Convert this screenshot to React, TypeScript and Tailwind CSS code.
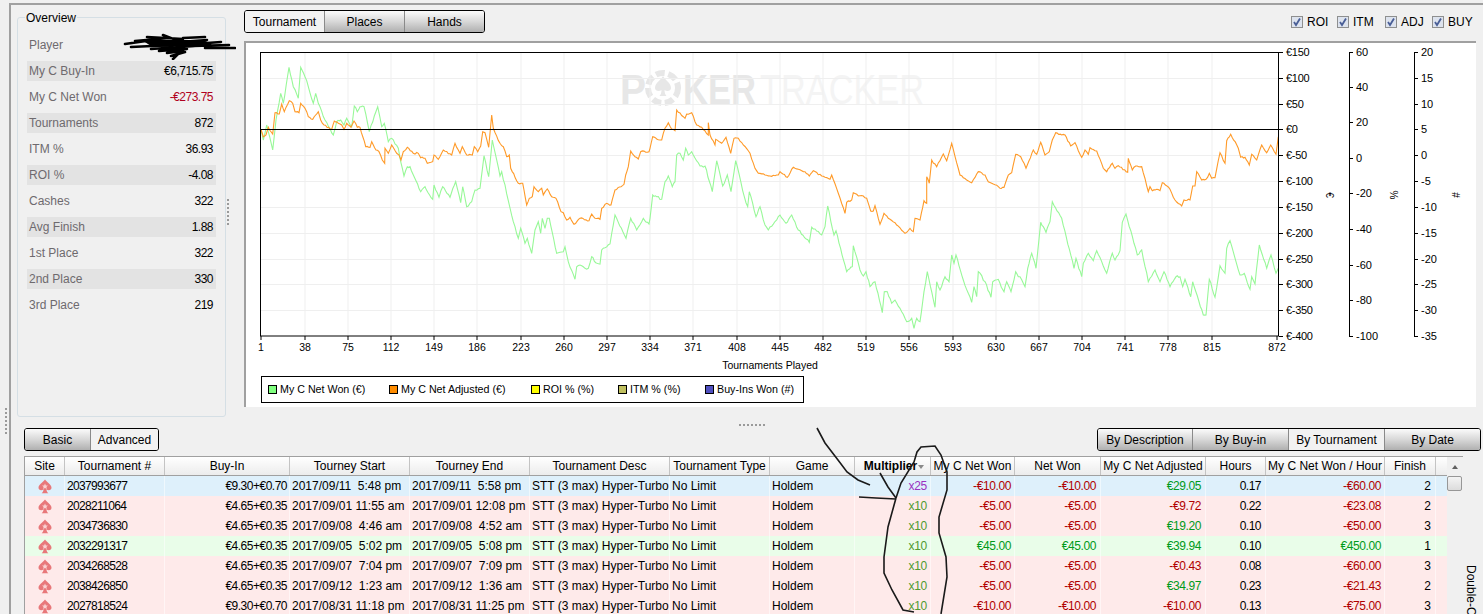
import React from "react";

type P = [number, number];
const z5 = (a: number[]) => pairs(a).map(([x, y]): P => [250 + x / 3, 40 + y / 3]);
const z6 = (a: number[]) => pairs(a).map(([x, y]): P => [650 + x / 3, 40 + y / 3]);
const z7 = (a: number[]) => pairs(a).map(([x, y]): P => [1000 + x / 3, 100 + y / 3]);
function pairs(a: number[]): P[] {
  const r: P[] = [];
  for (let i = 0; i < a.length; i += 2) r.push([a[i], a[i + 1]]);
  return r;
}
// The reference's curves zigzag at pixel level: subdivide each traced segment and add a small fixed wobble.
function noisy(p: P[], seed: number, amp: number) {
  let s = seed;
  const rnd = () => {
    s = (s * 16807) % 2147483647;
    return (s % 1000) / 1000 - 0.5;
  };
  const out: P[] = [];
  for (let i = 0; i < p.length - 1; i++) {
    const [x0, y0] = p[i];
    const [x1, y1] = p[i + 1];
    const n = Math.max(1, Math.round(Math.abs(x1 - x0) / 1.6));
    out.push([x0, y0]);
    for (let k = 1; k < n; k++) {
      const t = k / n;
      out.push([x0 + (x1 - x0) * t, y0 + (y1 - y0) * t + rnd() * amp]);
    }
  }
  out.push(p[p.length - 1]);
  return out.map(([x, y]) => `${x.toFixed(1)},${y.toFixed(1)}`).join(" ");
}

const green = noisy([
  ...z5([33,268,40,300,50,255,68,330,78,240,92,160,100,190,117,82,130,140,145,175,152,82,165,110,175,140,190,190,197,160,205,190,225,240,250,285,260,245,272,240,282,255,290,235,305,260,313,198,322,215,330,200,342,200,358,275,383,200,395,260,403,250,415,305,425,295,445,325,452,365,462,408,472,380,480,380,512,455,525,440,548,478,552,435,567,472,578,440,600,472,617,425,632,488,638,440,650,500,665,485,675,450,690,445,702,347,716,410,727,300,750,408,755,395,790,545,805,595,812,565,825,610,832,595,845,640,855,570,865,545,872,580,877,535,885,565,892,535,898,535,920,640,940,635,945,620,955,665,975,718,980,680,990,675,1005,685,1015,685,1025,650,1037,668,1050,672,1055,630,1080,612,1095,525,1128,595,1142,535,1160,570,1180,535,1197,552]),
  ...z6([0,535,8,465,20,470,35,478,45,425,55,408,67,440,75,425,80,345,90,340,100,360,107,325,115,345,125,335,150,378,165,378,187,455,200,362,218,438,232,405,243,455,257,362,283,470,293,500,298,455,318,530,330,500,345,555,355,570,380,540,390,525,408,550,425,525,445,570,478,607,485,562,515,585,525,560,533,498,552,585,558,572,590,695,607,680,610,617,630,690,640,708,648,695,660,740,675,725,697,818,703,755,712,755,725,790,735,780,750,805,770,845,785,835,792,865,800,835,810,845,822,755,832,695,855,802,860,725,870,750,885,710,897,725,905,645,912,670,918,645,940,720,965,787,972,740,980,770,985,695,1005,725,1023,772,1028,725,1045,718]),
  ...z7([0,550,12,575,20,545,33,575,47,515,55,530,60,530,75,560,83,505,95,460,108,505,122,367,130,380,138,397,150,365,157,305,185,355,222,505,228,475,245,530,250,490,265,460,280,482,290,452,320,520,337,460,345,480,360,452,367,367,378,342,402,430,412,465,425,450,445,545,465,510,480,545,492,515,510,560,528,530,540,530,548,560,555,538,572,590,578,545,610,645,618,645,628,538,645,592,660,497,675,520,680,445,690,422,720,525,733,520,750,568,755,530,765,552,778,435,800,505,813,465,828,520,835,505]),
], 4711, 2.2);

const orange = noisy([
  ...z5([33,268,40,290,48,285,55,262,68,282,75,218,88,222,95,192,103,215,118,182,128,190,135,215,147,218,152,190,165,205,175,230,188,238,197,225,205,215,212,240,222,255,245,268,253,243,265,250,275,255,282,268,290,250,303,262,312,243,322,262,330,262,347,320,360,322,365,305,378,330,387,335,397,360,404,370,405,325,415,340,425,315,440,340,447,345,453,360,460,335,472,322,490,340,505,340,512,353,525,355,532,370,548,365,552,345,565,358,580,330,605,345,615,310,630,340,637,320,650,345,667,345,673,320,683,335,692,318,698,275,705,278,716,322,725,225,730,265,750,310,760,320,770,350,778,345,782,385,805,430,818,430,830,495,838,475,847,470,852,440,865,455,875,445,880,465,892,447,905,470,918,475,933,515,940,518,950,540,960,532,972,553,990,535,1017,542,1025,522,1035,535,1050,538,1055,505,1070,490,1083,495,1095,450,1122,433,1127,405,1135,380,1142,333,1155,350,1165,357,1172,335,1197,335]),
  ...z6([0,325,8,290,20,297,35,300,45,265,55,248,65,268,75,272,80,210,100,230,105,235,110,222,125,218,140,255,155,262,175,285,175,248,180,285,195,315,197,298,215,310,228,292,242,340,252,295,265,295,280,315,300,340,315,385,325,400,345,405,360,408,385,405,390,395,412,412,430,382,465,395,478,408,490,392,515,408,540,418,545,405,565,460,585,520,590,487,605,480,610,458,625,468,640,468,650,475,662,513,670,513,675,497,690,553,702,520,715,535,735,548,765,580,780,565,790,575,795,535,810,540,822,482,830,490,830,410,838,430,845,360,860,380,880,342,890,362,905,310,930,405,965,428,985,395,1005,405,1015,425,1045,440]),
  ...z7([0,265,12,262,25,225,35,218,47,163,62,170,78,205,100,150,110,163,122,127,135,165,148,155,157,120,167,98,185,105,195,105,212,138,225,128,245,172,255,150,265,163,270,143,290,153,310,205,320,215,337,190,345,205,355,197,383,217,385,175,397,210,407,198,425,200,445,275,450,260,457,272,470,268,480,272,487,248,510,268,525,300,545,318,552,300,570,300,578,258,585,258,590,215,605,240,618,238,628,220,635,235,645,233,660,158,675,190,680,122,692,103,715,145,722,172,735,172,748,195,755,163,770,180,785,135,800,158,812,135,828,163,835,110]),
], 1297, 1.6);

const xTicks: [number, string][] = [[261,"1"],[305,"38"],[348,"75"],[391,"112"],[434,"149"],[477,"186"],[521,"223"],[564,"260"],[607,"297"],[650,"334"],[693,"371"],[737,"408"],[780,"445"],[823,"482"],[866,"519"],[909,"556"],[953,"593"],[996,"630"],[1039,"667"],[1082,"704"],[1125,"741"],[1168,"778"],[1212,"815"],[1277,"872"]];
const yGrid = [52,78,104,129,155,181,207,233,259,284,310,336];
const euro = ["€150","€100","€50","€0","€-50","€-100","€-150","€-200","€-250","€-300","€-350","€-400"];
const pct: [number, string][] = [[52,"60"],[87,"40"],[122,"20"],[158,"0"],[193,"-20"],[229,"-40"],[265,"-60"],[300,"-80"],[336,"-100"]];
const num = ["20","15","10","5","0","-5","-10","-15","-20","-25","-30","-35"];

function Chart() {
  const ox = 244, oy = 41;
  return (
    <svg width={1232} height={332} viewBox={`${ox} ${oy} 1232 332`} className="block shrink-0" style={{ fontFamily: '"Liberation Sans", Arial, sans-serif' }}>
      <g fill="#e7e7e7" fontWeight="700" fontSize="43">
        <text x={620} y={104} textLength={26} lengthAdjust="spacingAndGlyphs">P</text>
        <text x={683} y={104} textLength={73} lengthAdjust="spacingAndGlyphs">KER</text>
      </g>
      <text x={760} y={104} fontSize="43" fill="#f4f4f4" textLength={164} lengthAdjust="spacingAndGlyphs">TRACKER</text>
      <circle cx={663} cy={88} r={15} fill="none" stroke="#e7e7e7" strokeWidth={6} strokeDasharray="9 3.6" />
      <path d="M663 76c3 5 8 7 8 12 0 3-4 4-6.500 2 0 3 1 5 2 6h-7c1-1 2-3 2-6-2.500 2-6.500 1-6.500-2 0-5 5-7 8-12z" fill="#e7e7e7" />
      {xTicks.slice(1, -1).map(([x]) => <line key={x} x1={x} x2={x} y1={52} y2={336} stroke="#efefef" />)}
      {yGrid.slice(1, -1).map((y) => <line key={y} x1={261} x2={1279} y1={y + 0.5} y2={y + 0.5} stroke="#efefef" />)}
      <polyline points={green} fill="none" stroke="#98f898" strokeWidth={1.1} />
      <polyline points={orange} fill="none" stroke="#ff9a28" strokeWidth={1.1} />
      <line x1={260} x2={1279} y1={129.500} y2={129.500} stroke="#000" />
      <rect x={260.500} y={52.500} width={1018} height={283.500} fill="none" stroke="#000" />
      {xTicks.map(([x, t]) => (
        <g key={t}>
          <line x1={x} x2={x} y1={336} y2={340} stroke="#000" />
          <text x={x} y={351} textAnchor="middle" fontSize="10.500" fill="#000">{t}</text>
        </g>
      ))}
      <text x={770} y={369} textAnchor="middle" fontSize="10.500" fill="#000">Tournaments Played</text>
      {yGrid.map((y, i) => (
        <g key={y}>
          <line x1={1279} x2={1283} y1={y + 0.5} y2={y + 0.5} stroke="#000" />
          <text x={1286} y={y + 4} fontSize="11" letterSpacing="-0.3" fill="#000">{euro[i]}</text>
          <line x1={1414} x2={1418} y1={y + 0.5} y2={y + 0.5} stroke="#000" />
          <text x={1421} y={y + 4} fontSize="11" fill="#000">{num[i]}</text>
        </g>
      ))}
      {pct.map(([y, t]) => (
        <g key={t}>
          <line x1={1349} x2={1353} y1={y + 0.5} y2={y + 0.5} stroke="#000" />
          <text x={1356} y={y + 4} fontSize="11" fill="#000">{t}</text>
        </g>
      ))}
      <line x1={1349.500} x2={1349.500} y1={52} y2={336.500} stroke="#000" />
      <line x1={1414.500} x2={1414.500} y1={52} y2={336.500} stroke="#000" />
      <text transform="translate(1326 195) rotate(90)" textAnchor="middle" fontSize="10" fill="#000">€</text>
      <text transform="translate(1390 195) rotate(90)" textAnchor="middle" fontSize="10" fill="#000">%</text>
      <text transform="translate(1452 195) rotate(90)" textAnchor="middle" fontSize="10" fill="#000">#</text>
    </svg>
  );
}

function Stat({ label, value, shaded, red }: { label: string; value?: string; shaded?: boolean; red?: boolean }) {
  return (
    <div className={`h-[20px] mb-[6px] flex items-center justify-between pl-[2px] pr-[3px] ${shaded ? "bg-[#e3e3e3]" : ""}`}>
      <span className="text-[#6e6a6e]">{label}</span>
      <span className={`tracking-[-0.5px] ${red ? "text-[#b00020]" : "text-black"}`}>{value}</span>
    </div>
  );
}

const stats: [string, string][] = [["My C Buy-In","€6,715.75"],["My C Net Won","-€273.75"],["Tournaments","872"],["ITM %","36.93"],["ROI %","-4.08"],["Cashes","322"],["Avg Finish","1.88"],["1st Place","322"],["2nd Place","330"],["3rd Place","219"]];

function Seg({ label, w, active }: { label: string; w: string; active?: boolean }) {
  return (
    <div className={`${w} h-full flex items-center justify-center border-r border-[#8a8a8a] last:border-r-0 ${active ? "bg-[#f2f2f2]" : "bg-linear-to-b from-[#fbfbfb] via-[#d8d8d8] to-[#b0b0b0]"}`}>
      {label}
    </div>
  );
}

function Spade() {
  return (
    <svg width={14} height={15} viewBox="0 0 14 15">
      <path d="M7 0.500C9 3.500 13.500 5.500 13.500 8.800C13.500 11.200 10.500 12 8.300 10.300C8.500 11.800 9.300 13.300 10.300 14.300H3.700C4.700 13.300 5.500 11.800 5.700 10.300C3.500 12 0.500 11.200 0.500 8.800C0.500 5.500 5 3.500 7 0.500Z" fill="#e8787a" />
      <path d="M7 4.500l0.900 1.900 2 .2-1.500 1.300.5 2-1.900-1-1.900 1 .5-2-1.500-1.300 2-.2z" fill="#f9d2d2" />
    </svg>
  );
}

const cols = [
  { t: "Site", w: "w-[40px]", c: "justify-center" },
  { t: "Tournament #", w: "w-[100px]", c: "justify-center" },
  { t: "Buy-In", w: "w-[125px]", c: "justify-center" },
  { t: "Tourney Start", w: "w-[120px]", c: "justify-center" },
  { t: "Tourney End", w: "w-[120px]", c: "justify-center" },
  { t: "Tournament Desc", w: "w-[140px]", c: "justify-center" },
  { t: "Tournament Type", w: "w-[100px]", c: "justify-center" },
  { t: "Game", w: "w-[85px]", c: "justify-center" },
  { t: "Multiplier", w: "w-[76px]", c: "justify-center font-bold pl-[3px]" },
  { t: "My C Net Won", w: "w-[84px]", c: "justify-center" },
  { t: "Net Won", w: "w-[86px]", c: "justify-center" },
  { t: "My C Net Adjusted", w: "w-[105px]", c: "justify-center" },
  { t: "Hours", w: "w-[60px]", c: "justify-center" },
  { t: "My C Net Won / Hour", w: "w-[119px]", c: "justify-center" },
  { t: "Finish", w: "w-[51px]", c: "justify-center" },
];

type Row = { bg: string; id: string; buy: string; s: string; e: string; m: string; a: string; b: string; c: string; h: string; r: string; f: string };
const rows: Row[] = [
  { bg: "bg-[#def0fb]", id: "2037993677", buy: "€9.30+€0.70", s: "2017/09/11  5:48 pm", e: "2017/09/11  5:58 pm", m: "x25", a: "-€10.00", b: "-€10.00", c: "€29.05", h: "0.17", r: "-€60.00", f: "2" },
  { bg: "bg-[#feeaea]", id: "2028211064", buy: "€4.65+€0.35", s: "2017/09/01 11:55 am", e: "2017/09/01 12:08 pm", m: "x10", a: "-€5.00", b: "-€5.00", c: "-€9.72", h: "0.22", r: "-€23.08", f: "2" },
  { bg: "bg-[#feeaea]", id: "2034736830", buy: "€4.65+€0.35", s: "2017/09/08  4:46 am", e: "2017/09/08  4:52 am", m: "x10", a: "-€5.00", b: "-€5.00", c: "€19.20", h: "0.10", r: "-€50.00", f: "3" },
  { bg: "bg-[#e9fde9]", id: "2032291317", buy: "€4.65+€0.35", s: "2017/09/05  5:02 pm", e: "2017/09/05  5:08 pm", m: "x10", a: "€45.00", b: "€45.00", c: "€39.94", h: "0.10", r: "€450.00", f: "1" },
  { bg: "bg-[#feeaea]", id: "2034268528", buy: "€4.65+€0.35", s: "2017/09/07  7:04 pm", e: "2017/09/07  7:09 pm", m: "x10", a: "-€5.00", b: "-€5.00", c: "-€0.43", h: "0.08", r: "-€60.00", f: "3" },
  { bg: "bg-[#feeaea]", id: "2038426850", buy: "€4.65+€0.35", s: "2017/09/12  1:23 am", e: "2017/09/12  1:36 am", m: "x10", a: "-€5.00", b: "-€5.00", c: "€34.97", h: "0.23", r: "-€21.43", f: "2" },
  { bg: "bg-[#feeaea]", id: "2027818524", buy: "€9.30+€0.70", s: "2017/08/31 11:18 pm", e: "2017/08/31 11:25 pm", m: "x10", a: "-€10.00", b: "-€10.00", c: "-€10.00", h: "0.13", r: "-€75.00", f: "3" },
];

const money = (v: string) => (v.startsWith("-") ? "text-[#b00000]" : "text-[#009a1a]");
const cell = "h-full flex items-center border-r border-white/50 whitespace-pre overflow-hidden";

function TableRow({ r }: { r: Row }) {
  return (
    <div className={`h-[20px] flex ${r.bg}`}>
      <div className={`${cell} w-[40px] justify-center`}><Spade /></div>
      <div className={`${cell} w-[100px] pl-[2px] tracking-[-0.65px]`}>{r.id}</div>
      <div className={`${cell} w-[125px] justify-end pr-[2px] tracking-[-0.5px]`}>{r.buy}</div>
      <div className={`${cell} w-[120px] pl-[2px]`}>{r.s}</div>
      <div className={`${cell} w-[120px] pl-[2px]`}>{r.e}</div>
      <div className={`${cell} w-[140px] pl-[2px]`}>STT (3 max) Hyper-Turbo</div>
      <div className={`${cell} w-[100px] pl-[2px]`}>No Limit</div>
      <div className={`${cell} w-[85px] pl-[2px]`}>Holdem</div>
      <div className={`${cell} w-[76px] justify-end pr-[3px] tracking-[-0.3px] ${r.m === "x25" ? "text-[#9a30c0]" : "text-[#4f9a30]"}`}>{r.m}</div>
      <div className={`${cell} w-[84px] justify-end pr-[3px] tracking-[-0.4px] ${money(r.a)}`}>{r.a}</div>
      <div className={`${cell} w-[86px] justify-end pr-[4px] tracking-[-0.4px] ${money(r.b)}`}>{r.b}</div>
      <div className={`${cell} w-[105px] justify-end pr-[4px] tracking-[-0.4px] ${money(r.c)}`}>{r.c}</div>
      <div className={`${cell} w-[60px] justify-end pr-[4px] tracking-[-0.5px]`}>{r.h}</div>
      <div className={`${cell} w-[119px] justify-end pr-[3px] tracking-[-0.4px] ${money(r.r)}`}>{r.r}</div>
      <div className={`${cell} w-[51px] justify-end pr-[4px]`}>{r.f}</div>
      <div className="flex-1" />
    </div>
  );
}

function Dots({ vertical }: { vertical?: boolean }) {
  return (
    <div className={`flex ${vertical ? "flex-col" : ""} gap-[2px]`}>
      {[0, 1, 2, 3, 4, 5, 6].map((i) => <span key={i} className="w-[2px] h-[2px] bg-[#9a9a9a]" />)}
    </div>
  );
}

function Check({ label, w }: { label: string; w: string }) {
  return (
    <div className={`${w} flex items-center gap-[4px]`}>
      <span className="w-[12px] h-[12px] border border-[#8e8f8f] bg-[#dde3ee] flex items-center justify-center">
        <svg width={10} height={10} viewBox="0 0 10 10"><path d="M2 5l2 3 4-6.500" fill="none" stroke="#4a5f97" strokeWidth={1.8} /></svg>
      </span>
      <span>{label}</span>
    </div>
  );
}

const legend: [string, string, string][] = [
  ["My C Net Won (€)", "bg-[#80ff80]", "w-[121px]"],
  ["My C Net Adjusted (€)", "bg-[#ff8c00]", "w-[142px]"],
  ["ROI % (%)", "bg-[#ffff00]", "w-[87px]"],
  ["ITM % (%)", "bg-[#c0c060]", "w-[87px]"],
  ["Buy-Ins Won (#)", "bg-[#5050c0]", "w-[96px]"],
];

export default function App() {
  return (
    <div className="w-[1483px] h-[614px] overflow-hidden relative bg-[#f0f0f0] flex text-[12px] leading-none text-black" style={{ fontFamily: '"Liberation Sans", Arial, sans-serif' }}>
      <div className="w-[9px] shrink-0 flex flex-col items-center pt-[408px] pl-[2px]"><Dots vertical /></div>
      <div className="flex-1 min-w-0 mt-[3px] border-l-2 border-t-2 border-[#a0a0a0] flex flex-col">
        <div className="h-[404px] flex shrink-0">
          <div className="w-[209px] h-[400px] ml-[6px] mt-[12px] shrink-0 border border-[#d5dfe5] rounded-[3px] relative px-[9px] pt-[17px]">
            <span className="absolute left-[7px] -top-[6px] bg-[#f0f0f0] px-[1px]">Overview</span>
            <Stat label="Player" />
            {stats.map(([l, v], i) => <Stat key={l} label={l} value={v} shaded={i % 2 === 0} red={l === "My C Net Won"} />)}
          </div>
          <div className="w-[18px] shrink-0 flex items-center justify-start pl-[1px] pt-[10px]"><Dots vertical /></div>
          <div className="flex-1 flex flex-col min-w-0">
            <div className="h-[36px] flex items-start pt-[5px] justify-between pr-[7px] shrink-0">
              <div className="flex h-[23px] border border-black rounded-[3px] overflow-hidden">
                <Seg label="Tournament" w="w-[80px]" active />
                <Seg label="Places" w="w-[80px]" />
                <Seg label="Hands" w="w-[79px]" />
              </div>
              <div className="flex mt-[6px]">
                <Check label="ROI" w="w-[46px]" />
                <Check label="ITM" w="w-[48px]" />
                <Check label="ADJ" w="w-[47px]" />
                <Check label="BUY" w="w-[44px]" />
              </div>
            </div>
            <div className="w-[1232px] h-[366px] bg-white border-l-2 border-t-2 border-[#a0a0a0] overflow-hidden">
              <div className="-ml-[2px] -mt-[2px]"><Chart /></div>
              <div className="flex items-center w-[543px] h-[27px] ml-[15px] mt-[3px] border-[1.5px] border-black pl-[6px] text-[10.700px] whitespace-nowrap">
                {legend.map(([t, c, w]) => (
                  <div key={t} className={`${w} flex items-center gap-[3px]`}>
                    <span className={`w-[9px] h-[9px] border border-black ${c}`} />
                    <span>{t}</span>
                  </div>
                ))}
              </div>
            </div>
          </div>
        </div>
        <div className="h-[19px] shrink-0 flex justify-center items-end pl-[10px] pb-[2px]"><Dots /></div>
        <div className="h-[23px] flex justify-between items-start shrink-0 pl-[13px] pr-[2px]">
          <div className="flex h-[23px] border border-black rounded-[3px] overflow-hidden">
            <Seg label="Basic" w="w-[66px]" />
            <Seg label="Advanced" w="w-[67px]" active />
          </div>
          <div className="flex h-[23px] border border-black rounded-[3px] overflow-hidden">
            <Seg label="By Description" w="w-[95px]" />
            <Seg label="By Buy-in" w="w-[96px]" />
            <Seg label="By Tournament" w="w-[96px]" active />
            <Seg label="By Date" w="w-[95px]" />
          </div>
        </div>
        <div className="flex mt-[5px] pl-[13px]">
          <div className="w-[1439px] h-[160px] shrink-0 border-l border-t border-[#a0a0a0] bg-[#f0f0f0] flex overflow-hidden">
            <div className="flex-1 min-w-0 flex flex-col">
              <div className="h-[19px] flex shrink-0 border-b border-[#a0a0a0] bg-linear-to-b from-white to-[#ececec]">
                {cols.map((c) => (
                  <div key={c.t} className={`${c.w} ${c.c} h-full flex items-center border-r border-[#c4c4c4] whitespace-nowrap`}>
                    {c.t}
                    {c.t === "Multiplier" && <span className="ml-[1px] mt-[2px] border-x-[3px] border-t-[4px] border-x-transparent border-t-[#8a8a8a]" />}
                  </div>
                ))}
              </div>
              {rows.map((r) => <TableRow key={r.id} r={r} />)}
            </div>
            <div className="w-[16px] shrink-0 flex flex-col items-start">
              <div className="h-[19px] w-[15px] flex items-center justify-center"><span className="border-x-[3px] border-b-[4px] border-x-transparent border-b-[#606060]" /></div>
              <div className="w-[15px] h-[15px] border border-[#979797] rounded-[2px] bg-linear-to-b from-[#f4f4f4] to-[#dcdcdc]" />
            </div>
          </div>
          <div className="flex-1 pt-[109px] pl-[2px]"><span className="[writing-mode:vertical-rl]">Double-Click</span></div>
        </div>
      </div>

      <svg className="absolute left-[123px] top-[33px]" width={113} height={27} viewBox="0 0 113 27" fill="none" stroke="#000" strokeLinecap="round">
        <path d="M2 11L30 7M12 8L46 5M24 4L60 6M40 2L58 9M44 10L84 7M60 5L82 4M56 12L98 9M70 13L106 12M82 15L112 15M8 14L50 12M28 16L72 13M36 18L64 16M44 20L60 18M48 23L62 19M50 26L56 20" strokeWidth={2.6} />
        <path d="M22 8L80 8L88 12L30 13Z" fill="#000" strokeWidth={2} />
      </svg>
      <svg className="absolute left-0 top-0 pointer-events-none" width={1483} height={614} viewBox="0 0 1483 614" fill="none" stroke="#1a1a1a" strokeWidth={1.6}>
        <polyline points="817,428 825,443 838,460 847,472 858,480 870,485" />
        <polyline points="880,473 888,487 896,498" />
        <polyline points="859,497 876,498 896,499" />
        <polyline points="896,498 901,483 914,462 917,452 921,447 935,446 941,455 947,472 947,490 939,517 939,533 946,557 947,577 941,614" />
        <polyline points="896,498 888,527 884,557 884,573 892,590 903,610 914,612" />
      </svg>
    </div>
  );
}
